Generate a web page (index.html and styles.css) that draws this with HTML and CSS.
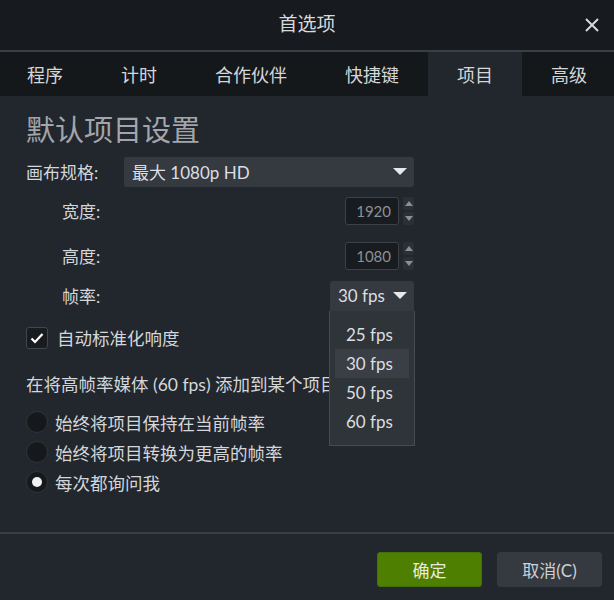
FILE: index.html
```html
<!DOCTYPE html>
<html lang="zh-CN">
<head>
  <meta charset="UTF-8">
  <meta name="viewport" content="width=device-width, initial-scale=1.0">
  <title>首选项</title>
  <link rel="stylesheet" href="styles.css">
</head>
<body>
  <div class="dialog">
    <header class="titlebar">
      <span></span>
      <span class="title">首选项</span>
      <svg class="close" width="14" height="14" viewBox="0 0 14 14">
        <path d="M1 1 L13 13 M13 1 L1 13" stroke="#d6d8db" stroke-width="2" fill="none"/>
      </svg>
    </header>

    <!-- 标签页 -->
    <nav class="tabs">
      <span class="tab">程序</span>
      <span class="tab">计时</span>
      <span class="tab">合作伙伴</span>
      <span class="tab">快捷键</span>
      <span class="tab active">项目</span>
      <span class="tab">高级</span>
    </nav>

    <main class="content">
      <h1>默认项目设置</h1>

      <div class="form">
        <div class="row row-canvas">
          <label class="label">画布规格:</label>
          <div class="select select-wide">
            <span>最大 1080p HD</span>
            <span class="arrow"></span>
          </div>
        </div>

        <div class="row row-size">
          <label class="label sub">宽度:</label>
          <div class="spin">
            <div class="spin-box">1920</div>
            <div class="spin-btns">
              <span class="spin-btn"><span class="tri-up"></span></span>
              <span class="spin-btn"><span class="tri-down"></span></span>
            </div>
          </div>
        </div>

        <div class="row row-size row-height">
          <label class="label sub">高度:</label>
          <div class="spin">
            <div class="spin-box">1080</div>
            <div class="spin-btns">
              <span class="spin-btn"><span class="tri-up"></span></span>
              <span class="spin-btn"><span class="tri-down"></span></span>
            </div>
          </div>
        </div>

        <div class="row row-fps">
          <label class="label sub">帧率:</label>
          <div class="select select-fps">
            <span>30 fps</span>
            <span class="arrow"></span>
            <ul class="menu">
              <li>25 fps</li>
              <li class="hover">30 fps</li>
              <li>50 fps</li>
              <li>60 fps</li>
            </ul>
          </div>
        </div>
      </div>

      <div class="check-row">
        <span class="checkbox">
          <svg width="14" height="12" viewBox="0 0 14 12">
            <path d="M1.5 6.5 L5 10 L12.5 2" stroke="#ffffff" stroke-width="2.2" fill="none"/>
          </svg>
        </span>
        <span>自动标准化响度</span>
      </div>

      <p class="note">在将高帧率媒体 (60 fps) 添加到某个项目时</p>

      <div class="radios">
        <div class="radio-row"><span class="radio"></span><span>始终将项目保持在当前帧率</span></div>
        <div class="radio-row"><span class="radio"></span><span>始终将项目转换为更高的帧率</span></div>
        <div class="radio-row"><span class="radio checked"></span><span>每次都询问我</span></div>
      </div>
    </main>

    <footer class="buttons">
      <button class="btn btn-ok">确定</button>
      <button class="btn btn-cancel">取消(C)</button>
    </footer>
  </div>
</body>
</html>
```

FILE: styles.css
```css
body {
  margin: 0;
  background-color: #22262d;
  font-family: Lato, "Noto Sans CJK SC", sans-serif;
  color: #d4d7da;
}

.dialog {
  width: 614px;
  height: 600px;
  display: flex;
  flex-direction: column;
  overflow: hidden;
}

.titlebar {
  height: 50px;
  display: grid;
  grid-template-columns: 1fr auto 1fr;
  align-items: center;
  background-color: #171a1e;
  border-bottom: 2px solid #3a3f46;
}

.title {
  margin-bottom: 5px;
  font-size: 19px;
  color: #d8dadd;
}

.close {
  justify-self: end;
  margin-right: 15px;
}

.tabs {
  height: 44px;
  display: flex;
  margin-left: -2px;
  background-color: #15181b;
}

.tab {
  display: flex;
  align-items: center;
  padding: 0 29px;
  font-size: 18px;
  color: #d4d7da;
  white-space: nowrap;
}

.tab.active {
  background-color: #22262d;
}

.content {
  flex: 1;
  padding: 16px 0 0 26px;
}

h1 {
  margin: 0;
  font-size: 29px;
  line-height: 35px;
  font-weight: 400;
  color: #a2a6ab;
}

.form {
  width: 388px;
}

.row {
  display: flex;
  align-items: center;
  font-size: 17px;
}

.row-canvas {
  margin-top: 10px;
  height: 30px;
}

.row-size {
  margin-top: 10px;
  height: 28px;
}

.row-height {
  margin-top: 17px;
}

.row-fps {
  margin-top: 11px;
  height: 31px;
}

.label {
  width: 98px;
  padding-bottom: 2px;
}

.label.sub {
  width: auto;
  padding-left: 36px;
}

.select {
  position: relative;
  display: flex;
  align-items: center;
  justify-content: space-between;
  box-sizing: border-box;
  height: 100%;
  padding: 0 7px 2px 8px;
  background-color: #353a41;
  border-radius: 3px;
  font-size: 17px;
  color: #dcdee1;
}

.select-wide {
  width: 290px;
}

.select-fps {
  width: 84px;
  margin-left: auto;
  border-radius: 3px 3px 0 0;
}

.arrow {
  width: 0;
  height: 0;
  border-left: 7px solid transparent;
  border-right: 7px solid transparent;
  border-top: 7px solid #e6e8ea;
}

.menu {
  position: absolute;
  top: 30px;
  left: -1px;
  width: 86px;
  box-sizing: border-box;
  margin: 0;
  padding: 9px 5px 9px;
  list-style: none;
  background-color: #2f3439;
  border: 1px solid #464b52;
  border-top: none;
  z-index: 2;
}

.menu li {
  height: 29px;
  line-height: 29px;
  padding-left: 11px;
  font-size: 17px;
  color: #dcdee1;
}

.menu li.hover {
  background-color: #3a3f46;
}

.spin {
  display: flex;
  align-items: center;
  margin-left: auto;
  height: 100%;
}

.spin-box {
  width: 54px;
  height: 28px;
  box-sizing: border-box;
  padding-right: 7px;
  line-height: 26px;
  text-align: right;
  font-size: 15px;
  color: #8c9095;
  background-color: #181b1f;
  border: 1px solid #3c4148;
  border-radius: 3px;
}

.spin-btns {
  display: flex;
  flex-direction: column;
  gap: 2px;
  margin-left: 4px;
}

.spin-btn {
  width: 11px;
  height: 13px;
  display: flex;
  align-items: center;
  justify-content: center;
  background-color: #2c3036;
  border-radius: 2px;
}

.tri-up,
.tri-down {
  width: 0;
  height: 0;
  border-left: 4px solid transparent;
  border-right: 4px solid transparent;
}

.tri-up {
  border-bottom: 5px solid #8c9095;
}

.tri-down {
  border-top: 5px solid #8c9095;
}

.check-row {
  display: flex;
  align-items: center;
  gap: 9px;
  margin-top: 14px;
  height: 23px;
  font-size: 17.5px;
}

.checkbox {
  width: 22px;
  height: 22px;
  box-sizing: border-box;
  display: flex;
  align-items: center;
  justify-content: center;
  background-color: #181b1f;
  border: 1.5px solid #41464d;
  border-radius: 3px;
}

.note {
  width: 303px;
  overflow: hidden;
  margin: 24px 0 0;
  font-size: 17.5px;
  line-height: 24px;
  white-space: nowrap;
}

.radios {
  display: flex;
  flex-direction: column;
  gap: 8px;
  margin-top: 14px;
}

.radio-row {
  display: flex;
  align-items: center;
  gap: 7px;
  height: 22px;
  font-size: 17.5px;
}

.radio {
  width: 22px;
  height: 22px;
  box-sizing: border-box;
  border-radius: 50%;
  background-color: #16191c;
  border: 1.5px solid #2f343a;
  display: flex;
  align-items: center;
  justify-content: center;
}

.radio.checked::after {
  content: "";
  width: 10px;
  height: 10px;
  border-radius: 50%;
  background-color: #eef0f2;
}

.buttons {
  display: flex;
  justify-content: flex-end;
  gap: 15px;
  padding: 18px 12px 13px 0;
  border-top: 2px solid #3a3f47;
}

.btn {
  width: 105px;
  height: 35px;
  border-radius: 3px;
  font-family: Lato, "Noto Sans CJK SC", sans-serif;
  font-size: 17px;
  cursor: pointer;
}

.btn-ok {
  background-color: #4f7f00;
  border: 1px solid #44700a;
  color: #e8ecdf;
}

.btn-cancel {
  background-color: #353a41;
  border: 1px solid #353a41;
  color: #cfd2d5;
}
```
